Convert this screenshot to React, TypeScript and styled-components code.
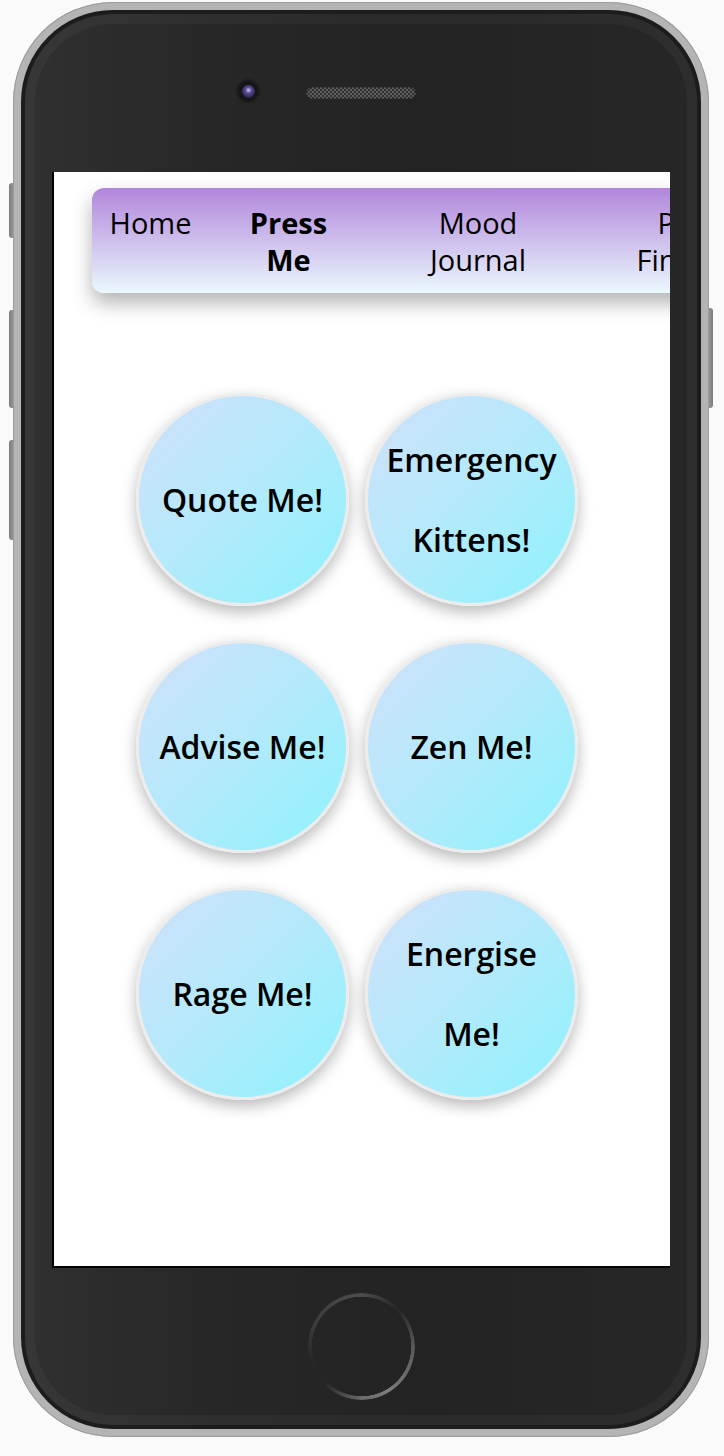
import styled, { createGlobalStyle } from "styled-components";

const GlobalStyle = createGlobalStyle`
  html, body {
    margin: 0;
    padding: 0;
    background: #fafafa;
  }
  body {
    font-family: "Open Sans", "Noto Sans", "Liberation Sans", sans-serif;
  }
`;

const navItems = [
  { label: "Home", width: 117 },
  { label: "Press Me", width: 159, active: true },
  { label: "Mood Journal", width: 220 },
  { label: "Pet Finder", width: 183 },
];

const moods = [
  "Quote Me!",
  "Emergency Kittens!",
  "Advise Me!",
  "Zen Me!",
  "Rage Me!",
  "Energise Me!",
];

const Page = styled.div`
  display: flex;
  align-items: flex-start;
  width: 724px;
  height: 1456px;
  padding: 2px 0 0 9px;
  box-sizing: border-box;
`;

const SideRail = styled.div`
  display: flex;
  flex-direction: column;
  width: 4px;
  flex: none;
`;

const SideButton = styled.div<{ $top: number; $height: number; $right?: boolean }>`
  margin-top: ${(p) => p.$top}px;
  height: ${(p) => p.$height}px;
  width: 4px;
  background: ${(p) =>
    p.$right
      ? "linear-gradient(to left, #7c7c81, #939397)"
      : "linear-gradient(to right, #7c7c81, #939397)"};
  border-radius: ${(p) => (p.$right ? "0 3px 3px 0" : "3px 0 0 3px")};
`;

const Frame = styled.div`
  width: 696px;
  height: 1435px;
  flex: none;
  box-sizing: border-box;
  padding: 8px;
  border-radius: 100px;
  background: #b4b4b4;
  box-shadow: inset 0 0 0 1px #9c9c9c;
`;

const Bezel = styled.div`
  height: 100%;
  box-sizing: border-box;
  padding: 4px;
  border-radius: 92px;
  background: #1c1c1c;
`;

const Body = styled.div`
  height: 100%;
  display: flex;
  flex-direction: column;
  align-items: center;
  border-radius: 88px;
  background: linear-gradient(90deg, #303030 0%, #272727 28%, #232323 60%, #272727 100%);
  box-shadow: inset 0 0 0 10px rgba(255, 255, 255, 0.035);
`;

const TopBar = styled.div`
  width: 100%;
  height: 158px;
  flex: none;
  display: grid;
  grid-template-columns: 1fr auto 1fr;
  align-items: center;
`;

const Camera = styled.div`
  justify-self: end;
  margin-right: 45px;
  width: 26px;
  height: 26px;
  border-radius: 50%;
  display: flex;
  align-items: center;
  justify-content: center;
  margin-top: -4px;
  background: radial-gradient(circle, #151515 48%, rgba(21, 21, 21, 0) 72%);
`;

const Lens = styled.div`
  width: 13px;
  height: 13px;
  border-radius: 50%;
  background: radial-gradient(circle at 50% 40%, #b0a6da 0 11%, #5b4d93 28%, #3a3064 60%, #1d1a28 100%);
`;

const Speaker = styled.div`
  width: 110px;
  height: 12px;
  border-radius: 6px;
  background: repeating-conic-gradient(#5e5e5e 0 25%, #323232 0 50%) 0 0 / 4px 4px;
  box-shadow: inset 0 0 2px rgba(0, 0, 0, 0.7);
`;

const Screen = styled.div`
  width: 618px;
  height: 1096px;
  flex: none;
  box-sizing: border-box;
  border-left: 2px solid #000;
  border-bottom: 2px solid #000;
  background: #fff;
  overflow: hidden;
`;

const Nav = styled.nav`
  display: grid;
  grid-template-columns: ${navItems.map((n) => `${n.width}px`).join(" ")};
  width: 679px;
  height: 105px;
  box-sizing: border-box;
  margin: 16px 0 0 38px;
  padding-top: 16px;
  align-items: start;
  border-radius: 12px;
  background: linear-gradient(to bottom, #b286db 0%, #eaf8fd 100%);
  box-shadow: 0 10px 20px rgba(0, 0, 0, 0.3);
`;

const NavLink = styled.a<{ $active?: boolean }>`
  justify-self: center;
  width: min-content;
  text-align: center;
  font-size: 29px;
  line-height: 37px;
  font-weight: ${(p) => (p.$active ? 700 : 400)};
  color: #000;
  text-decoration: none;
  cursor: pointer;
`;

const MoodGrid = styled.div`
  display: grid;
  grid-template-columns: repeat(2, 213px);
  column-gap: 16px;
  row-gap: 34px;
  margin: 100px 0 0 82px;
`;

const MoodButton = styled.button`
  width: 213px;
  height: 213px;
  box-sizing: border-box;
  padding: 0 12px;
  border: 3px solid #ececec;
  border-radius: 50%;
  background: linear-gradient(135deg, #d0e0fa 0%, #b3eafb 50%, #8df2fd 100%);
  box-shadow: 0 6px 15px rgba(0, 0, 0, 0.28);
  display: flex;
  align-items: center;
  justify-content: center;
  text-align: center;
  font-family: "Open Sans", "Noto Sans", "Liberation Sans", sans-serif;
  font-size: 32px;
  font-weight: 600;
  line-height: 80px;
  color: #000;
  cursor: pointer;
`;

const BottomBar = styled.div`
  flex: 1;
  display: flex;
  align-items: center;
  justify-content: center;
`;

const HomeButton = styled.div`
  width: 107px;
  height: 107px;
  border-radius: 50%;
  background: conic-gradient(
    #4c4c4c 0deg,
    #262626 45deg,
    #585858 90deg,
    #7c7c7c 150deg,
    #6a6a6a 180deg,
    #262626 225deg,
    #262626 250deg,
    #3a3a3a 290deg,
    #4c4c4c 360deg
  );
  -webkit-mask: radial-gradient(farthest-side, transparent calc(100% - 4px), #000 calc(100% - 3.5px));
  mask: radial-gradient(farthest-side, transparent calc(100% - 4px), #000 calc(100% - 3.5px));
`;

export default function App() {
  return (
    <>
      <GlobalStyle />
      <Page>
        <SideRail>
          <SideButton $top={181} $height={55} />
          <SideButton $top={72} $height={98} />
          <SideButton $top={32} $height={100} />
        </SideRail>
        <Frame>
          <Bezel>
            <Body>
              <TopBar>
                <Camera>
                  <Lens />
                </Camera>
                <Speaker />
              </TopBar>
              <Screen>
                <Nav>
                  {navItems.map((item) => (
                    <NavLink key={item.label} $active={item.active}>
                      {item.label}
                    </NavLink>
                  ))}
                </Nav>
                <MoodGrid>
                  {moods.map((m) => (
                    <MoodButton key={m}>{m}</MoodButton>
                  ))}
                </MoodGrid>
              </Screen>
              <BottomBar>
                <HomeButton />
              </BottomBar>
            </Body>
          </Bezel>
        </Frame>
        <SideRail>
          <SideButton $top={306} $height={100} $right />
        </SideRail>
      </Page>
    </>
  );
}
